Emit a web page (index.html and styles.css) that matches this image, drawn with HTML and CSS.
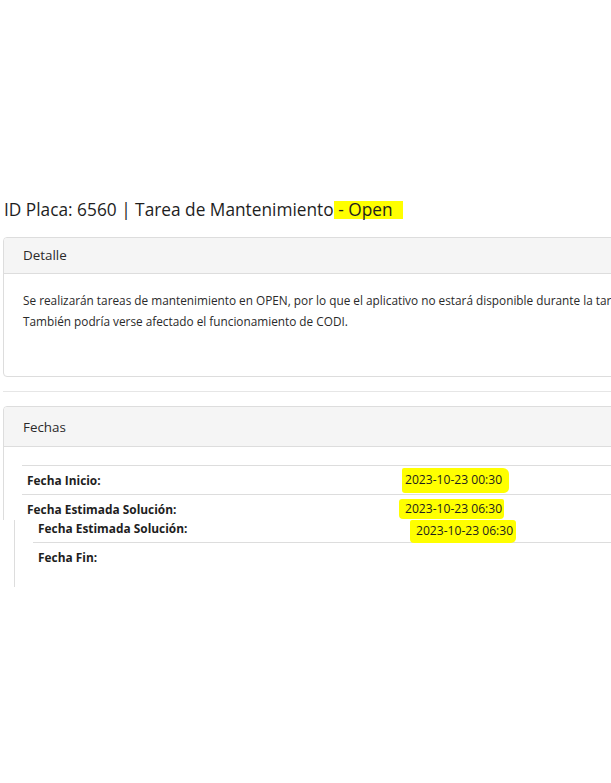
FILE: index.html
```html
<!DOCTYPE html>
<html lang="es">
<head>
<meta charset="utf-8">
<title>ID Placa: 6560 | Tarea de Mantenimiento - Open</title>
<link rel="stylesheet" href="styles.css">
</head>
<body>
<div class="page">
  <h3 class="title">ID Placa: 6560 | Tarea de Mantenimiento<span class="hl-title"> - Open </span></h3>

  <div class="panel">
    <div class="panel-heading panel-heading-sm">Detalle</div>
    <div class="panel-body detail-body">
      <p class="detail-text">Se realizarán tareas de mantenimiento en OPEN, por lo que el aplicativo no estará disponible durante la tarea.<br>También podría verse afectado el funcionamiento de CODI.</p>
    </div>
  </div>

  <hr class="divider">

  <div class="panel">
    <div class="panel-heading">Fechas</div>
    <div class="panel-body dates-body">
      <div class="dates">
        <div class="row">
          <div class="label">Fecha Inicio:</div>
          <div class="value"><span class="marker m1">2023-10-23 00:30</span></div>
        </div>
        <div class="row">
          <div class="label">Fecha Estimada Solución:</div>
          <div class="value"><span class="marker m2">2023-10-23 06:30</span></div>
        </div>
      </div>
    </div>
  </div>

  <div class="paste">
    <div class="paste-panel">
      <div class="dates paste-dates">
        <div class="row row-first">
          <div class="label">Fecha Estimada Solución:</div>
          <div class="value"><span class="marker m3">2023-10-23 06:30</span></div>
        </div>
        <div class="row">
          <div class="label">Fecha Fin:</div>
          <div class="value"></div>
        </div>
      </div>
    </div>
  </div>
</div>
</body>
</html>
```

FILE: styles.css
```css
html, body {
  margin: 0;
  padding: 0;
  background: #ffffff;
}
body {
  width: 611px;
  height: 783px;
  overflow: hidden;
  font-family: "Open Sans", "Noto Sans", "DejaVu Sans", sans-serif;
  color: #333333;
}
.page {
  position: relative;
  padding-top: 199px;
}
.title {
  margin: 0 0 16px 4px;
  font-size: 17.3px;
  font-weight: 400;
  line-height: 22px;
  color: #1e1e1e;
  white-space: nowrap;
}
.hl-title {
  background: #ffff00;
  display: inline-block;
  line-height: 17px;
  padding: 0 6px 1px 0;
  white-space: pre;
}
.panel {
  margin-left: 3px;
  width: 900px;
  border: 1px solid #dddddd;
  border-radius: 4px;
  background: #ffffff;
}
.panel-heading {
  height: 39px;
  line-height: 40px;
  padding: 0 19px;
  background: #f5f5f5;
  border-bottom: 1px solid #dddddd;
  border-radius: 3px 3px 0 0;
  font-size: 13.4px;
  color: #2a2a2a;
}
.panel-heading-sm {
  height: 35px;
  line-height: 35px;
}
.detail-body {
  height: 102px;
  padding: 16px 19px 0 19px;
  box-sizing: border-box;
}
.detail-text {
  margin: 0;
  font-size: 11.8px;
  line-height: 21px;
  white-space: nowrap;
  color: #2a2a2a;
}
.divider {
  margin: 14px 0 14px 3px;
  border: 0;
  border-top: 1px solid #e6e6e6;
  height: 0;
}
.dates-body {
  padding: 18px 18px 40px 18px;
}
.dates {
  width: 760px;
}
.row {
  display: grid;
  grid-template-columns: 378px 1fr;
  border-top: 1px solid #dddddd;
  height: 28px;
  align-items: center;
}
.label {
  padding-left: 5px;
  font-size: 11.9px;
  font-weight: 700;
  color: #1e1e1e;
}
.value {
  padding-left: 5px;
  font-size: 12.1px;
  color: #1e1e1e;
}
.marker {
  background: #ffff00;
  display: inline-block;
  line-height: 15px;
}
.m1 {
  padding: 4px 7px 6px 3px;
  margin-left: -3px;
  border-radius: 2px 6px 5px 3px;
}
.m2 {
  padding: 2px 2px 3px 6px;
  margin-left: -6px;
  border-radius: 3px 2px 4px 4px;
}
.m3 {
  padding: 3px 3px 5px 6px;
  margin-left: -6px;
  border-radius: 2px 3px 5px 4px;
}
/* pasted overlay of the same table, shifted */
.paste {
  position: absolute;
  left: 0;
  top: 520px;
  width: 611px;
  height: 67px;
  background: #ffffff;
  overflow: hidden;
}
.paste-panel {
  margin-left: 14px;
  height: 67px;
  border-left: 1px solid #dddddd;
  padding-left: 18px;
}
.paste-dates .row-first {
  border-top: 0;
  height: 22px;
  align-items: start;
}
.paste-dates .row-first .label,
.paste-dates .row-first .value {
  line-height: 17px;
}
```
